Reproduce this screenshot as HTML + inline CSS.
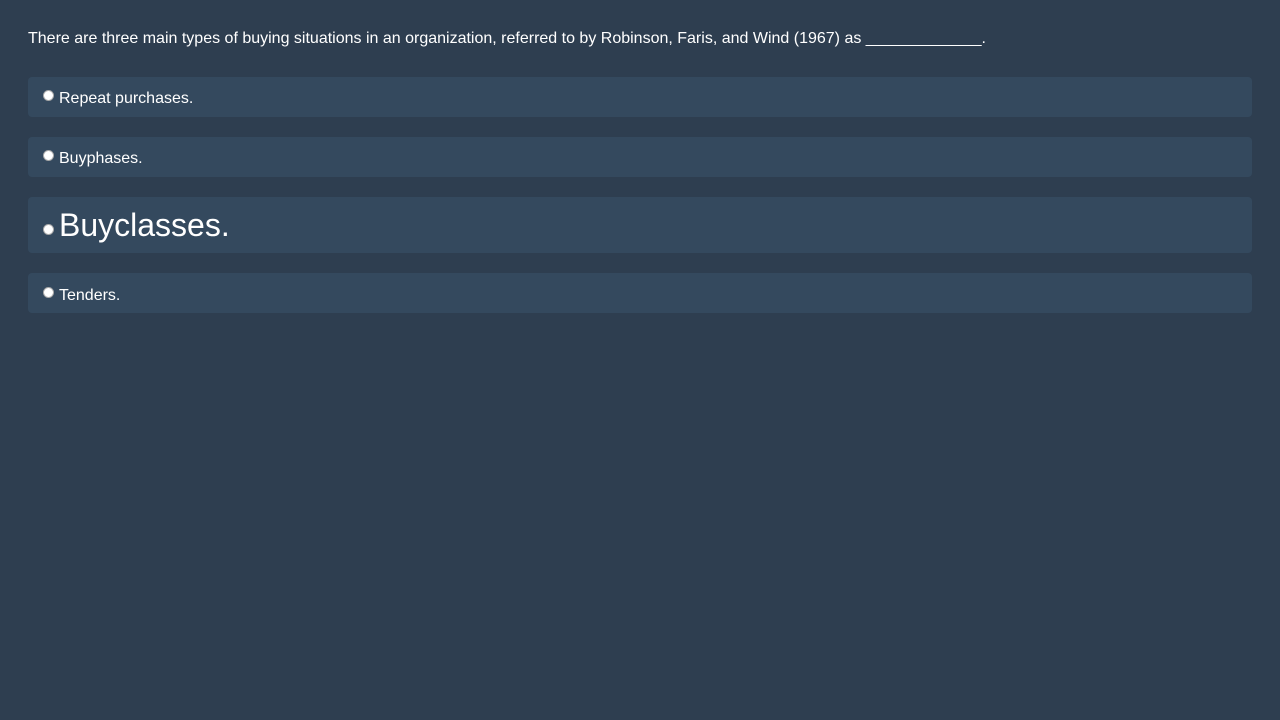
<!DOCTYPE html>
<html><head><meta charset="utf-8"><style>
html,body{margin:0;padding:0;}
body{width:1280px;height:720px;background:#2e3e50;font-family:"Liberation Sans",sans-serif;color:#fff;overflow:hidden;}
.q{position:absolute;left:28px;top:28px;font-size:16px;line-height:19px;}
.opt{position:absolute;left:28px;width:1224px;background:#34495e;border-radius:4px;}
.r{position:absolute;left:15px;width:11px;height:11px;border-radius:50%;background:#fff;border:1px solid #aaa;box-sizing:border-box;}
.t{position:absolute;left:31px;font-size:16px;line-height:19px;}
</style></head><body>
<div class="q" style="top:29px">There are three main types of buying situations in an organization, referred to by Robinson, Faris, and Wind (1967) as _____________.</div>
<div class="opt" style="top:77px;height:40px"><span class="r" style="top:13px"></span><span class="t" style="top:12px">Repeat purchases.</span></div>
<div class="opt" style="top:137px;height:40px"><span class="r" style="top:13px"></span><span class="t" style="top:12px">Buyphases.</span></div>
<div class="opt" style="top:197px;height:56px"><span class="r" style="top:27px"></span><span class="t" style="top:10px;font-size:32px;line-height:37px">Buyclasses.</span></div>
<div class="opt" style="top:273px;height:40px"><span class="r" style="top:14px"></span><span class="t" style="top:13px">Tenders.</span></div>
</body></html>
